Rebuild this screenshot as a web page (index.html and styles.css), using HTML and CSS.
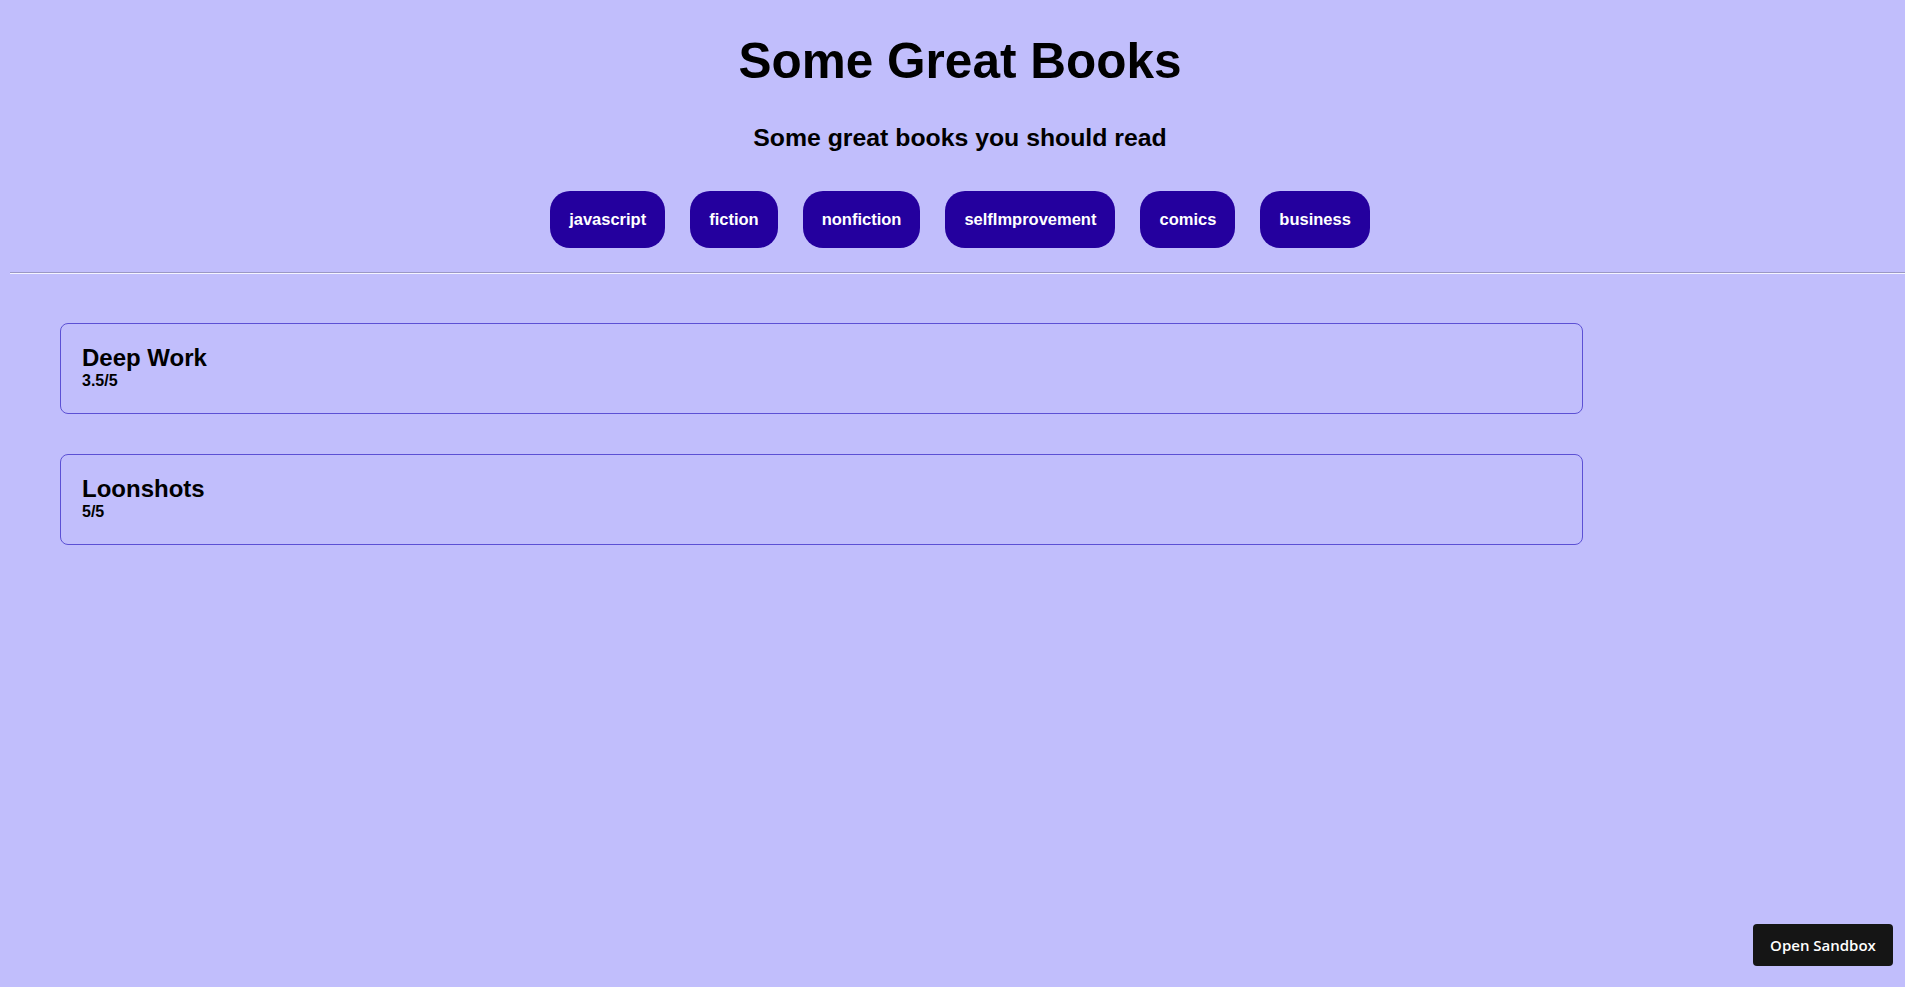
FILE: index.html
```html
<!DOCTYPE html>
<html lang="en">
<head>
<meta charset="utf-8">
<title>Some Great Books</title>
<link rel="stylesheet" href="styles.css">
</head>
<body>
<div class="app">
  <header class="header">
    <h1 class="title">Some Great Books</h1>
    <h2 class="subtitle">Some great books you should read</h2>
    <nav class="genres">
      <button class="genre">javascript</button>
      <button class="genre">fiction</button>
      <button class="genre">nonfiction</button>
      <button class="genre">selfImprovement</button>
      <button class="genre">comics</button>
      <button class="genre">business</button>
    </nav>
  </header>
  <hr class="divider">
  <ul class="books">
    <li class="book">
      <div class="book-name">Deep Work</div>
      <div class="book-rating">3.5/5</div>
    </li>
    <li class="book">
      <div class="book-name">Loonshots</div>
      <div class="book-rating">5/5</div>
    </li>
  </ul>
</div>
<a class="sandbox-btn" href="#">Open Sandbox</a>
</body>
</html>
```
FILE: styles.css
```css
html, body {
  overflow-x: hidden;
}
body {
  margin: 0;
  background: #c1befc;
  font-family: "Liberation Sans", Arial, sans-serif;
  color: #000;
  min-height: 987px;
}
.app {
  margin-left: 10px;
  width: 1900px;
}
.header {
  text-align: center;
  display: flex;
  flex-direction: column;
  align-items: center;
}
.title {
  margin: 32px 0 0;
  font-size: 49.5px;
  font-weight: 700;
}
.subtitle {
  margin: 35px 0 0;
  font-size: 24.8px;
  font-weight: 700;
}
.genres {
  margin-top: 39px;
  display: flex;
  gap: 25px;
  justify-content: center;
}
.genre {
  height: 57px;
  padding: 0 19px;
  border: none;
  border-radius: 20px;
  background: #24009e;
  color: #fff;
  font-family: "Liberation Sans", Arial, sans-serif;
  font-size: 16.5px;
  font-weight: 700;
  cursor: pointer;
}
.divider {
  margin: 24px 0 0;
  border: 0;
  border-top: 1px solid #9a98c4;
  border-bottom: 1px solid #f4f4ff;
  height: 0;
}
.books {
  list-style: none;
  margin: 49px 0 0;
  padding: 0;
  display: flex;
  flex-direction: column;
  gap: 40px;
}
.book {
  box-sizing: border-box;
  margin-left: 50px;
  width: 1523px;
  height: 91px;
  padding: 20px 21px;
  border: 1px solid #5c50d4;
  border-radius: 8px;
}
.book-name {
  font-size: 24px;
  font-weight: 700;
}
.book-rating {
  font-size: 16px;
  font-weight: 700;
  line-height: 17px;
}
.sandbox-btn {
  position: fixed;
  right: 12px;
  bottom: 21px;
  width: 140px;
  height: 42px;
  box-sizing: border-box;
  display: flex;
  align-items: center;
  justify-content: center;
  background: #151515;
  color: #fff;
  border-radius: 4px;
  text-decoration: none;
  font-family: "Open Sans", "Noto Sans", sans-serif;
  font-weight: 600;
  font-size: 15px;
}
```
